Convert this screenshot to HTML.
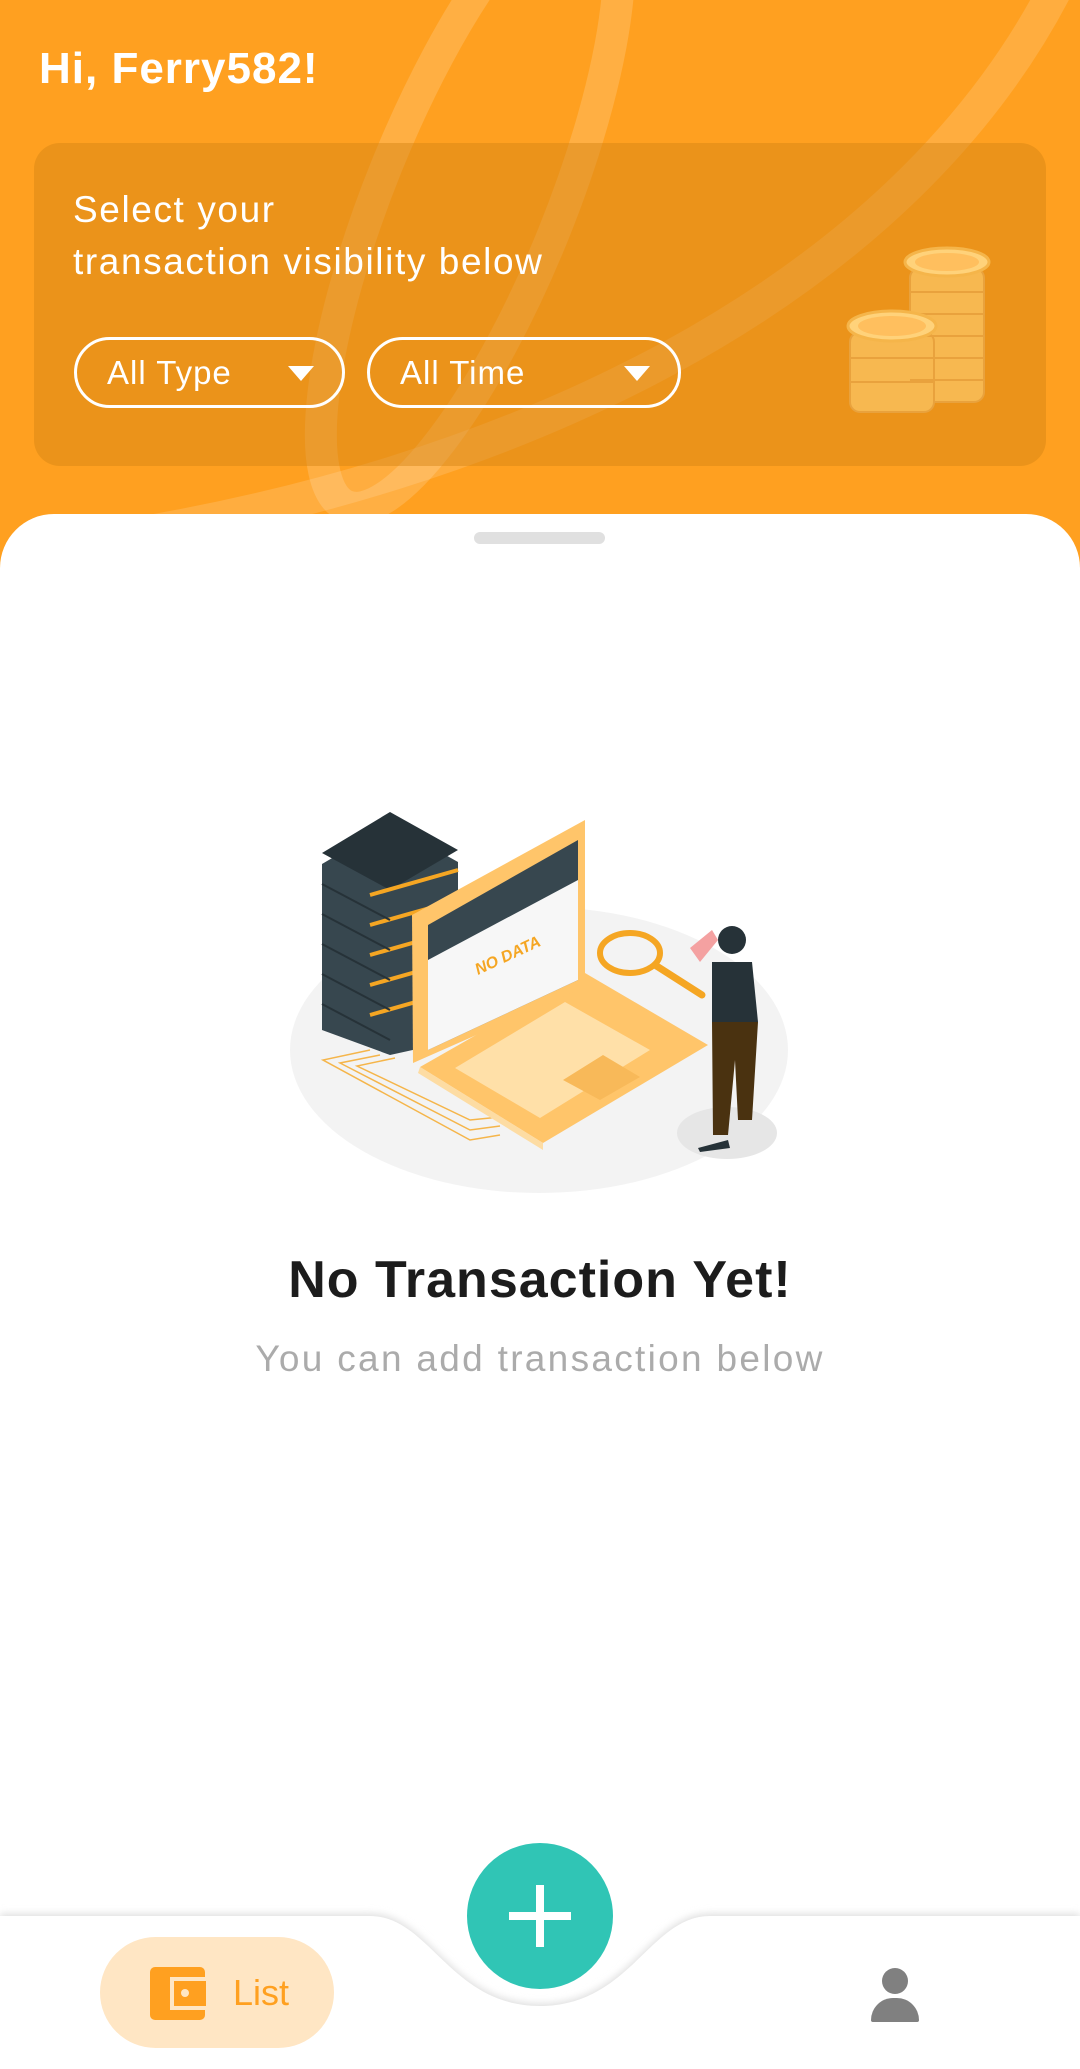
<!DOCTYPE html>
<html><head><meta charset="utf-8"><style>
*{margin:0;padding:0;box-sizing:border-box}
html,body{width:1080px;height:2069px;overflow:hidden;background:#fff;font-family:"Liberation Sans",sans-serif}
.abs{position:absolute}
</style></head><body>
<div class="abs" style="left:0;top:0;width:1080px;height:600px;background:#FFA020;overflow:hidden">
<svg class="abs" style="left:0;top:0" width="1080" height="600">
<ellipse cx="470" cy="200" rx="90" ry="330" transform="rotate(22 470 200)" fill="none" stroke="rgba(255,255,255,0.16)" stroke-width="32"/>
<path d="M1060 -20 C 900 300, 500 480, 100 540" fill="none" stroke="rgba(255,255,255,0.14)" stroke-width="34"/>
</svg>
</div>
<div class="abs" style="left:39px;top:44px;color:#fff;font-size:44px;font-weight:bold;letter-spacing:1px">Hi, Ferry582!</div>
<div class="abs" style="left:34px;top:143px;width:1012px;height:323px;border-radius:26px;background:rgba(210,130,20,0.45)"></div>
<div class="abs" style="left:73px;top:184px;color:#fff;font-size:37px;line-height:52px;letter-spacing:1.6px">Select your<br>transaction visibility below</div>
<div class="abs" style="left:74px;top:337px;width:271px;height:71px;border:3px solid #fff;border-radius:36px;color:#fff;font-size:33px;line-height:65px;padding-left:30px;letter-spacing:1px">All Type
<div class="abs" style="right:28px;top:26px;width:0;height:0;border-left:13px solid transparent;border-right:13px solid transparent;border-top:15px solid #fff"></div></div>
<div class="abs" style="left:367px;top:337px;width:314px;height:71px;border:3px solid #fff;border-radius:36px;color:#fff;font-size:33px;line-height:65px;padding-left:30px;letter-spacing:1px">All Time
<div class="abs" style="right:28px;top:26px;width:0;height:0;border-left:13px solid transparent;border-right:13px solid transparent;border-top:15px solid #fff"></div></div>
<svg class="abs" style="left:840px;top:240px" width="180" height="180">
<g fill="#F7B850" stroke="#E9A23D" stroke-width="2">
<rect x="70" y="28" width="74" height="134" rx="10"/>
<rect x="10" y="92" width="84" height="80" rx="10"/>
</g>
<g stroke="#E9A23D" stroke-width="2">
<path d="M70 52h74M70 74h74M70 96h74M70 118h74M70 140h74M10 118h84M10 142h84"/>
</g>
<ellipse cx="107" cy="22" rx="42" ry="14" fill="#FFD27A" stroke="#F5B54A" stroke-width="3"/>
<ellipse cx="107" cy="22" rx="32" ry="9" fill="#FFBF5E"/>
<ellipse cx="52" cy="86" rx="44" ry="15" fill="#FFD27A" stroke="#F5B54A" stroke-width="3"/>
<ellipse cx="52" cy="86" rx="34" ry="10" fill="#FFBF5E"/>
</svg>
<div class="abs" style="left:0;top:514px;width:1080px;height:1555px;background:#fff;border-radius:54px 54px 0 0"></div>
<div class="abs" style="left:474px;top:532px;width:131px;height:12px;background:#E0E0E0;border-radius:6px"></div>
<svg class="abs" style="left:0;top:0" width="1080" height="1300">
<ellipse cx="539" cy="1050" rx="249" ry="143" fill="#F3F3F3"/>
<g fill="none" stroke="#F5B54A" stroke-width="1.5">
<path d="M370 1050 L323 1060 L470 1140 L500 1135"/><path d="M380 1055 L340 1063 L470 1130 L500 1126"/><path d="M395 1058 L357 1066 L470 1120 L500 1117"/>
</g>
<g>
<path d="M322 864 L390 824 L458 862 L458 1040 L390 1055 L322 1030 Z" fill="#37474F"/>
<path d="M322 853 L390 812 L458 850 L390 890 Z" fill="#263238"/>
<g stroke="#F5A623" stroke-width="4"><path d="M370 895 L458 870"/><path d="M370 925 L458 900"/><path d="M370 955 L458 930"/><path d="M370 985 L458 960"/><path d="M370 1015 L458 990"/></g>
<g stroke="#263238" stroke-width="2"><path d="M322 884 L390 920"/><path d="M322 914 L390 950"/><path d="M322 944 L390 980"/><path d="M322 974 L390 1010"/><path d="M322 1004 L390 1040"/></g>
</g>
<path d="M420 1067 L543 1143 L708 1045 L585 973 Z" fill="#FFC56A"/>
<path d="M420 1067 L543 1143 L543 1150 L418 1073 Z" fill="#FDDCA3"/>
<path d="M455 1068 L540 1118 L650 1050 L565 1002 Z" fill="#FFE6B8" opacity="0.8"/>
<path d="M563 1080 L600 1100 L640 1077 L603 1055 Z" fill="#F8B959"/>
<path d="M412 915 L585 820 L585 987 L413 1063 Z" fill="#FFC56A"/>
<path d="M428 925 L578 840 L578 980 L428 1050 Z" fill="#37474F"/>
<path d="M428 960 L578 880 L578 980 L428 1050 Z" fill="#F7F7F7"/>
<text x="478" y="975" font-family="Liberation Sans,sans-serif" font-style="italic" font-weight="bold" font-size="16" fill="#F5A623" transform="rotate(-25 478 975)">NO DATA</text>
<ellipse cx="630" cy="953" rx="30" ry="20" fill="none" stroke="#F5A623" stroke-width="6"/>
<path d="M655 965 L702 995" stroke="#F5A623" stroke-width="7" stroke-linecap="round"/>
<ellipse cx="727" cy="1133" rx="50" ry="26" fill="#E6E6E6"/>
<path d="M712 962 L752 962 L758 1022 L712 1022 Z" fill="#263238"/>
<path d="M712 1022 L758 1022 L752 1120 L738 1120 L735 1060 L728 1135 L713 1135 Z" fill="#4A3210"/>
<circle cx="732" cy="940" r="14" fill="#263238"/>
<path d="M690 948 L712 930 L718 940 L700 962 Z" fill="#F4A1A1"/>
<path d="M698 1148 L728 1140 L730 1148 L700 1152 Z" fill="#263238"/>
</svg>
<div class="abs" style="left:0;top:1250px;width:1080px;text-align:center;font-size:52px;font-weight:bold;color:#1c1c1c;letter-spacing:1px">No Transaction Yet!</div>
<div class="abs" style="left:0;top:1338px;width:1080px;text-align:center;font-size:37px;color:#ABABAB;letter-spacing:2.3px">You can add transaction below</div>
<svg class="abs" style="left:0;top:1880px" width="1080" height="189">
<defs><filter id="s" x="-10%" y="-50%" width="120%" height="200%"><feGaussianBlur stdDeviation="4"/></filter></defs>
<path d="M0 34 L370 34 C430 34 450 124 540 124 C630 124 650 34 710 34 L1080 34 L1080 189 L0 189 Z" fill="#ddd" filter="url(#s)"/>
<path d="M0 36 L370 36 C430 36 450 126 540 126 C630 126 650 36 710 36 L1080 36 L1080 189 L0 189 Z" fill="#fff"/>
</svg>
<div class="abs" style="left:467px;top:1843px;width:146px;height:146px;border-radius:50%;background:#30C5B5"></div>
<div class="abs" style="left:509px;top:1912px;width:62px;height:8px;background:#fff"></div>
<div class="abs" style="left:536px;top:1885px;width:8px;height:62px;background:#fff"></div>
<div class="abs" style="left:100px;top:1937px;width:234px;height:111px;border-radius:56px;background:#FFE6C4"></div>
<div class="abs" style="left:150px;top:1967px;width:55px;height:53px;border-radius:5px;background:#FFA020"></div>
<div class="abs" style="left:170px;top:1977px;width:36px;height:33px;border:4px solid #FFE6C4;border-right:none;background:#FFA020"></div>
<div class="abs" style="left:181px;top:1989px;width:8px;height:8px;border-radius:50%;background:#FFE6C4"></div>
<div class="abs" style="left:233px;top:1972px;font-size:36px;color:#FFA020">List</div>
<div class="abs" style="left:882px;top:1968px;width:26px;height:26px;border-radius:50%;background:#808080"></div>
<div class="abs" style="left:871px;top:1998px;width:48px;height:24px;border-radius:24px 24px 2px 2px;background:#808080"></div>
</body></html>
